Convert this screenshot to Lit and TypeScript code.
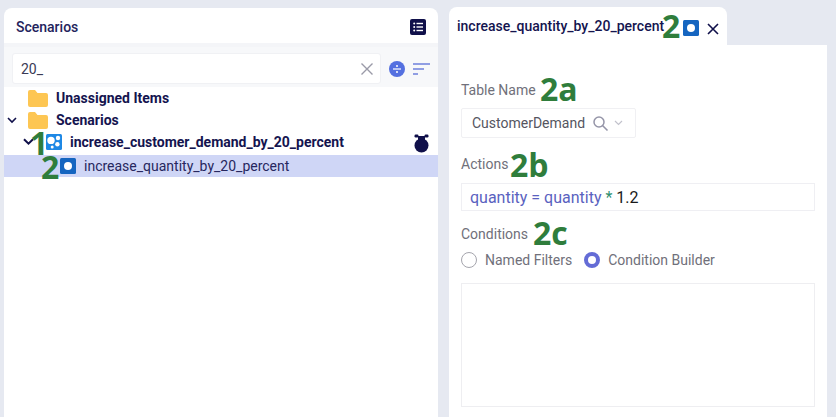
import { LitElement, html, css, svg } from "lit";
import { customElement } from "lit/decorators.js";

const scenarioIcon = svg`<svg width="16" height="16" viewBox="0 0 16 16"><rect width="16" height="16" rx="1.5" fill="#1e88e5"/><circle cx="5" cy="6.4" r="3.7" fill="#fff"/><circle cx="12" cy="4" r="2.2" fill="#fff"/><circle cx="11.4" cy="10.2" r="2.2" fill="#fff"/><circle cx="6.2" cy="13" r="1.5" fill="#fff"/></svg>`;
const ruleIcon = svg`<svg width="16" height="16" viewBox="0 0 16 16"><rect width="16" height="16" rx="1.5" fill="#1565c0"/><circle cx="8" cy="8" r="4" fill="#fff"/></svg>`;
const folder = svg`<svg width="20" height="17" viewBox="0 0 20 17"><path d="M0 2a2 2 0 0 1 2-2h5l2.5 3H18a2 2 0 0 1 2 2v10a2 2 0 0 1-2 2H2a2 2 0 0 1-2-2z" fill="#fdc653"/></svg>`;
const chevron = svg`<svg width="10" height="7" viewBox="0 0 10 7"><path d="M1 1l4 4 4-4" fill="none" stroke="#10104a" stroke-width="1.6"/></svg>`;
const chevronBold = svg`<svg width="11" height="8" viewBox="0 0 11 8"><path d="M1 1.2l4.5 4.5L10 1.2" fill="none" stroke="#10104a" stroke-width="2"/></svg>`;

@customElement("app-root")
export class AppRoot extends LitElement {
  static styles = css`
    :host { display: block; width: 836px; height: 417px; overflow: hidden; background: #e6e9f1; font-family: Roboto, sans-serif; color: #14144f; }
    .page { display: flex; height: 417px; padding: 8px 9px 0 4px; box-sizing: border-box; }
    .left { width: 434px; flex: none; background: #fff; border-radius: 8px 8px 0 0; display: flex; flex-direction: column; }
    .lhead { height: 39px; box-sizing: border-box; display: flex; align-items: center; justify-content: space-between; padding: 2px 12px 0; font-size: 14px; font-weight: 500; color: #23235c; border-bottom: 4px solid #f4f5f8; }
    .search { height: 40px; box-sizing: border-box; background: #f7f8fa; display: flex; align-items: flex-start; padding: 6px 8px 0; gap: 8px; }
    .input { width: 369px; height: 31px; box-sizing: border-box; background: #fff; border: 1px solid #f0f1f4; border-radius: 3px; display: flex; align-items: center; justify-content: space-between; padding: 0 6px 0 8px; font-size: 14px; color: #3a3a55; }
    .tools { display: flex; align-items: center; gap: 8px; height: 31px; }
    .tree { flex: 1; position: relative; }
    .row { height: 22px; display: flex; align-items: center; font-size: 14px; font-weight: 700; white-space: nowrap; position: relative; }
    .r0 { padding-left: 24px; gap: 8px; }
    .r0b { padding-left: 3px; }
    .r0b .folder { margin: 0 8px 0 11px; }
    .r1 { padding-left: 19px; margin-bottom: 2px; }
    .r1 .ic2 { margin: 0 8px 0 12px; display: flex; }
    .r2 { background: #cfd6f6; font-weight: 400; padding-left: 56px; gap: 8px; color: #27275e; }
    .ic { display: flex; }
    .clock { position: absolute; right: 9px; top: 3px; }
    .gap { width: 11px; flex: none; }
    .right { flex: 1; display: flex; flex-direction: column; min-width: 0; }
    .tabs { height: 38px; display: flex; margin-top: -1px; }
    .tab { width: 278px; background: #fff; border-radius: 8px 8px 0 0; display: flex; align-items: center; padding-left: 8px; box-sizing: border-box; font-size: 14px; font-weight: 500; position: relative; white-space: nowrap; }
    .tab .tic { position: absolute; left: 234px; top: 13px; display: flex; }
    .tab .x { position: absolute; left: 258px; top: 16px; display: flex; }
    .body { flex: 1; background: #fff; padding: 0 12px; display: flex; flex-direction: column; }
    .label { font-size: 14px; color: #70707a; line-height: 16px; }
    .l1 { margin-top: 37px; }
    .select { margin-top: 10px; width: 175px; height: 30px; box-sizing: border-box; border: 1px solid #f0f0f3; border-radius: 2px; display: flex; align-items: center; padding-left: 10px; gap: 7px; font-size: 14px; color: #55555f; }
    .l2 { margin-top: 18px; }
    .action { margin-top: 11px; height: 28px; box-sizing: border-box; border: 1px solid #efeff3; display: flex; align-items: center; padding-left: 8px; font-size: 16px; color: #5a62c0; }
    .action span { white-space: pre; }
    .action .star { color: #2f8f6f; }
    .action .num { color: #1a1a1a; }
    .l3 { margin-top: 15px; }
    .radios { margin-top: 7px; display: flex; align-items: center; font-size: 14px; color: #70707a; height: 22px; }
    .radio { width: 16px; height: 16px; box-sizing: border-box; border-radius: 50%; border: 1px solid #a5a5ad; margin-right: 8px; flex: none; }
    .on { border: 4px solid #646cd6; margin-left: 12px; background: #fff; }
    .box { margin-top: 12px; height: 124px; box-sizing: border-box; border: 1px solid #eeeef1; }
    .mark { position: absolute; font-family: "Open Sans", sans-serif; font-weight: 700; color: #2f7d3c; font-size: 32px; line-height: 32px; }
  `;

  render() {
    return html`<div class="page">
      <section class="left">
        <div class="lhead"><span>Scenarios</span>
          <svg width="16" height="16" viewBox="0 0 16 16"><rect width="16" height="16" rx="2" fill="#10104a"/><g fill="#fff"><circle cx="4.2" cy="4.5" r="1"/><circle cx="4.2" cy="8" r="1"/><circle cx="4.2" cy="11.5" r="1"/><rect x="6.5" y="3.8" width="6.5" height="1.4"/><rect x="6.5" y="7.3" width="6.5" height="1.4"/><rect x="6.5" y="10.8" width="6.5" height="1.4"/></g></svg>
        </div>
        <div class="search">
          <div class="input"><span>20_</span>
            <svg width="14" height="14" viewBox="0 0 14 14"><path d="M1.5 1.5l11 11M12.5 1.5l-11 11" stroke="#9a9aa8" stroke-width="1.4" fill="none"/></svg>
          </div>
          <div class="tools">
            <svg width="16" height="16" viewBox="0 0 16 16"><circle cx="8" cy="8" r="8" fill="#5470e0"/><rect x="4" y="7.4" width="8" height="1.2" fill="#fff"/><circle cx="8" cy="5" r="1" fill="#fff"/><circle cx="8" cy="11" r="1" fill="#fff"/></svg>
            <svg width="17" height="14" viewBox="0 0 17 14"><g fill="none" stroke="#6f80dc" stroke-width="1.5"><path d="M0 2h17M0 7h11M0 12h5"/></g></svg>
          </div>
        </div>
        <div class="tree">
          <div class="row r0"><span class="ic">${folder}</span>Unassigned Items</div>
          <div class="row r0b"><span class="ic">${chevron}</span><span class="ic folder">${folder}</span>Scenarios</div>
          <div class="row r1"><span class="ic">${chevronBold}</span><span class="ic2">${scenarioIcon}</span>increase_customer_demand_by_20_percent
            <svg class="clock" width="15" height="19" viewBox="0 0 15 19"><circle cx="7.5" cy="11.5" r="7" fill="#10104a"/><rect x="4" y="2" width="7" height="4" fill="#10104a"/><rect x="0.5" y="0.5" width="4" height="3" rx="1.2" fill="#10104a"/><rect x="10.5" y="0.5" width="4" height="3" rx="1.2" fill="#10104a"/></svg>
          </div>
          <div class="row r2"><span class="ic">${ruleIcon}</span><span>increase_quantity_by_20_percent</span></div>
        </div>
      </section>
      <div class="gap"></div>
      <section class="right">
        <div class="tabs"><div class="tab">increase_quantity_by_20_percent
          <span class="tic">${ruleIcon}</span>
          <span class="x"><svg width="12" height="12" viewBox="0 0 12 12"><path d="M1 1l10 10M11 1L1 11" stroke="#10104a" stroke-width="1.6" fill="none"/></svg></span>
        </div></div>
        <div class="body">
          <div class="label l1">Table Name</div>
          <div class="select">CustomerDemand
            <svg width="17" height="17" viewBox="0 0 17 17"><circle cx="7" cy="7" r="5" fill="none" stroke="#9595a8" stroke-width="1.5"/><path d="M10.5 10.5l5 5" stroke="#9595a8" stroke-width="1.6"/></svg>
            <svg style="margin-left:-2px" width="9" height="6" viewBox="0 0 9 6"><path d="M1 1l3.5 3.5L8 1" fill="none" stroke="#c2c2cc" stroke-width="1.2"/></svg>
          </div>
          <div class="label l2">Actions</div>
          <div class="action"><span>quantity = quantity <span class="star">*</span> <span class="num">1.2</span></span></div>
          <div class="label l3">Conditions</div>
          <div class="radios"><span class="radio"></span>Named Filters<span class="radio on"></span>Condition Builder</div>
          <div class="box"></div>
        </div>
      </section>
      <span class="mark" style="left:30px;top:127px">1</span>
      <span class="mark" style="left:41px;top:151px">2</span>
      <span class="mark" style="left:662px;top:10px">2</span>
      <span class="mark" style="left:540px;top:73px">2a</span>
      <span class="mark" style="left:510px;top:149px">2b</span>
      <span class="mark" style="left:533px;top:217px">2c</span>
    </div>`;
  }
}
